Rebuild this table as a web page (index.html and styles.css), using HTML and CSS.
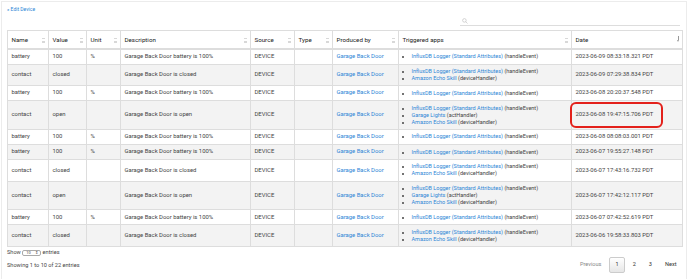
FILE: index.html
```html
<!DOCTYPE html>
<html lang="en">
<head>
    <meta charset="UTF-8">
    <title>Device Events</title>
    <link rel="stylesheet" href="styles.css">
</head>
<body>
<div class="page">
    <a class="back" href="#">« Edit Device</a>

    <div class="toolbar">
        <label class="search">
            <svg width="6" height="6" viewBox="0 0 6 6"><circle cx="2.4" cy="2.4" r="1.8" fill="none" stroke="#bbb" stroke-width="0.6"/><line x1="3.7" y1="3.7" x2="5.5" y2="5.5" stroke="#bbb" stroke-width="0.6"/></svg>
            <input type="text">
        </label>
    </div>

    <table class="events">
        <colgroup>
            <col style="width:41px"><col style="width:38px"><col style="width:34px"><col style="width:130px"><col style="width:44px"><col style="width:38px"><col style="width:66px"><col style="width:173px"><col style="width:111px">
        </colgroup>
        <thead>
            <tr>
                <th>Name<i class="sort"></i></th>
                <th>Value<i class="sort"></i></th>
                <th>Unit<i class="sort"></i></th>
                <th>Description<i class="sort"></i></th>
                <th>Source<i class="sort"></i></th>
                <th>Type<i class="sort"></i></th>
                <th>Produced by<i class="sort"></i></th>
                <th>Triggered apps<i class="sort"></i></th>
                <th>Date<i class="sort desc"></i></th>
            </tr>
        </thead>
        <tbody>
            <tr>
                <td>battery</td><td>100</td><td>%</td><td>Garage Back Door battery is 100%</td><td>DEVICE</td><td></td>
                <td><a href="#">Garage Back Door</a></td>
                <td><ul><li><a href="#">InfluxDB Logger (Standard Attributes)</a> (handleEvent)</li></ul></td>
                <td>2023-06-09 08:33:18.321 PDT</td>
            </tr>
            <tr>
                <td>contact</td><td>closed</td><td></td><td>Garage Back Door is closed</td><td>DEVICE</td><td></td>
                <td><a href="#">Garage Back Door</a></td>
                <td><ul><li><a href="#">InfluxDB Logger (Standard Attributes)</a> (handleEvent)</li><li><a href="#">Amazon Echo Skill</a> (deviceHandler)</li></ul></td>
                <td>2023-06-09 07:29:38.834 PDT</td>
            </tr>
            <tr>
                <td>battery</td><td>100</td><td>%</td><td>Garage Back Door battery is 100%</td><td>DEVICE</td><td></td>
                <td><a href="#">Garage Back Door</a></td>
                <td><ul><li><a href="#">InfluxDB Logger (Standard Attributes)</a> (handleEvent)</li></ul></td>
                <td>2023-06-08 20:20:37.548 PDT</td>
            </tr>
            <tr>
                <td>contact</td><td>open</td><td></td><td>Garage Back Door is open</td><td>DEVICE</td><td></td>
                <td><a href="#">Garage Back Door</a></td>
                <td><ul><li><a href="#">InfluxDB Logger (Standard Attributes)</a> (handleEvent)</li><li><a href="#">Garage Lights</a> (actHandler)</li><li><a href="#">Amazon Echo Skill</a> (deviceHandler)</li></ul></td>
                <td class="marked">2023-06-08 19:47:15.706 PDT<span class="ring"></span></td>
            </tr>
            <tr>
                <td>battery</td><td>100</td><td>%</td><td>Garage Back Door battery is 100%</td><td>DEVICE</td><td></td>
                <td><a href="#">Garage Back Door</a></td>
                <td><ul><li><a href="#">InfluxDB Logger (Standard Attributes)</a> (handleEvent)</li></ul></td>
                <td>2023-06-08 08:08:03.001 PDT</td>
            </tr>
            <tr>
                <td>battery</td><td>100</td><td>%</td><td>Garage Back Door battery is 100%</td><td>DEVICE</td><td></td>
                <td><a href="#">Garage Back Door</a></td>
                <td><ul><li><a href="#">InfluxDB Logger (Standard Attributes)</a> (handleEvent)</li></ul></td>
                <td>2023-06-07 19:55:27.148 PDT</td>
            </tr>
            <tr>
                <td>contact</td><td>closed</td><td></td><td>Garage Back Door is closed</td><td>DEVICE</td><td></td>
                <td><a href="#">Garage Back Door</a></td>
                <td><ul><li><a href="#">InfluxDB Logger (Standard Attributes)</a> (handleEvent)</li><li><a href="#">Amazon Echo Skill</a> (deviceHandler)</li></ul></td>
                <td>2023-06-07 17:43:16.732 PDT</td>
            </tr>
            <tr>
                <td>contact</td><td>open</td><td></td><td>Garage Back Door is open</td><td>DEVICE</td><td></td>
                <td><a href="#">Garage Back Door</a></td>
                <td><ul><li><a href="#">InfluxDB Logger (Standard Attributes)</a> (handleEvent)</li><li><a href="#">Garage Lights</a> (actHandler)</li><li><a href="#">Amazon Echo Skill</a> (deviceHandler)</li></ul></td>
                <td>2023-06-07 17:42:12.117 PDT</td>
            </tr>
            <tr>
                <td>battery</td><td>100</td><td>%</td><td>Garage Back Door battery is 100%</td><td>DEVICE</td><td></td>
                <td><a href="#">Garage Back Door</a></td>
                <td><ul><li><a href="#">InfluxDB Logger (Standard Attributes)</a> (handleEvent)</li></ul></td>
                <td>2023-06-07 07:42:52.619 PDT</td>
            </tr>
            <tr>
                <td>contact</td><td>closed</td><td></td><td>Garage Back Door is closed</td><td>DEVICE</td><td></td>
                <td><a href="#">Garage Back Door</a></td>
                <td><ul><li><a href="#">InfluxDB Logger (Standard Attributes)</a> (handleEvent)</li><li><a href="#">Amazon Echo Skill</a> (deviceHandler)</li></ul></td>
                <td>2023-06-06 19:58:33.803 PDT</td>
            </tr>
        </tbody>
    </table>

    <div class="footer">
        <div class="footer-left">
            <div class="length">Show <span class="select">10 <span class="caret">⇕</span></span> entries</div>
            <div class="info">Showing 1 to 10 of 22 entries</div>
        </div>
        <div class="paginate">
            <span class="page-btn disabled">Previous</span>
            <span class="page-btn current">1</span>
            <span class="page-btn">2</span>
            <span class="page-btn">3</span>
            <span class="page-btn">Next</span>
        </div>
    </div>
</div>
</body>
</html>
```

FILE: styles.css
```css
body {
    margin: 0;
    font-family: Roboto, "Liberation Sans", sans-serif;
    color: #444;
    background-color: white;
}
a {
    color: #2d86d6;
    text-decoration: none;
}
.page {
    margin: 1px 3px 0 1px;
    border: 1px solid #ececec;
    border-bottom: none;
    padding: 4px 4px 0 5px;
    height: 278px;
    box-sizing: border-box;
}
.back {
    display: block;
    font-size: 5px;
    line-height: 7px;
}
.toolbar {
    display: flex;
    justify-content: flex-end;
    margin-top: 4px;
}
.search {
    display: flex;
    align-items: center;
    width: 220px;
    height: 7px;
    border-bottom: 1px solid #ddd;
    margin-right: 2px;
    padding-bottom: 1px;
}
.search svg {
    margin-left: 2px;
}
.search input {
    border: none;
    outline: none;
    flex: 1;
    height: 6px;
    padding: 0;
}
.events {
    width: 675px;
    margin-top: 4px;
    table-layout: fixed;
    border-collapse: collapse;
    border: 1px solid #ddd;
    font-size: 5.9px;
}
.events th {
    position: relative;
    text-align: left;
    font-weight: normal;
    font-size: 6.2px;
    color: #222;
    line-height: 8px;
    padding: 4.5px 4px 4px 3.5px;
    border-left: 1px solid #ddd;
    border-bottom: 2px solid #ddd;
}
.events td {
    line-height: 7.5px;
    padding: 3.3px 3.5px;
    border-left: 1px solid #ddd;
    border-top: 1px solid #ddd;
    vertical-align: middle;
    white-space: nowrap;
}
.events tbody tr:nth-child(even) td {
    background-color: #f3f3f3;
}
.events ul {
    margin: 0;
    padding-left: 9px;
    font-size: 5.5px;
}
.events li {
    line-height: 7px;
}
.events li::marker {
    font-size: 5px;
}
.sort {
    position: absolute;
    right: 3px;
    top: 7px;
    width: 3px;
    height: 5px;
    background:
        linear-gradient(to bottom, #d8d8d8 0 1.5px, transparent 1.5px 3.5px, #d8d8d8 3.5px 5px);
}
.sort.desc {
    background: none;
    border-left: 1.5px solid transparent;
    border-right: 1.5px solid transparent;
    border-top: 2.5px solid #999;
    width: 0;
    height: 0;
    top: 9px;
}
.sort.desc::before {
    content: "";
    position: absolute;
    left: -0.5px;
    top: -6px;
    width: 1px;
    height: 4px;
    background-color: #999;
}
.marked {
    position: relative;
}
.ring {
    position: absolute;
    left: -2px;
    top: 1px;
    width: 93px;
    height: 26px;
    box-sizing: border-box;
    border: 2px solid #e3211b;
    border-radius: 6px;
}
.footer {
    display: flex;
    justify-content: space-between;
    align-items: flex-start;
    font-size: 5.6px;
}
.length {
    margin-top: 2px;
    line-height: 7px;
}
.select {
    display: inline-block;
    border: 1px solid #aaa;
    border-radius: 2px;
    font-size: 4px;
    line-height: 4px;
    padding: 0 2px 0 3px;
    width: 12px;
}
.caret {
    float: right;
}
.info {
    margin-top: 6px;
    line-height: 7px;
}
.paginate {
    display: flex;
    align-items: center;
    margin-top: 10px;
    margin-right: 0;
    gap: 2px;
}
.page-btn {
    display: inline-block;
    padding: 3.5px 4.5px;
    line-height: 7px;
    color: #333;
    border: 1px solid transparent;
    border-radius: 2px;
}
.page-btn.disabled {
    color: #888;
}
.page-btn.current {
    background: linear-gradient(to bottom, #fff, #e6e6e6);
    border-color: #ccc;
    padding: 3.5px 5.5px;
}
```
